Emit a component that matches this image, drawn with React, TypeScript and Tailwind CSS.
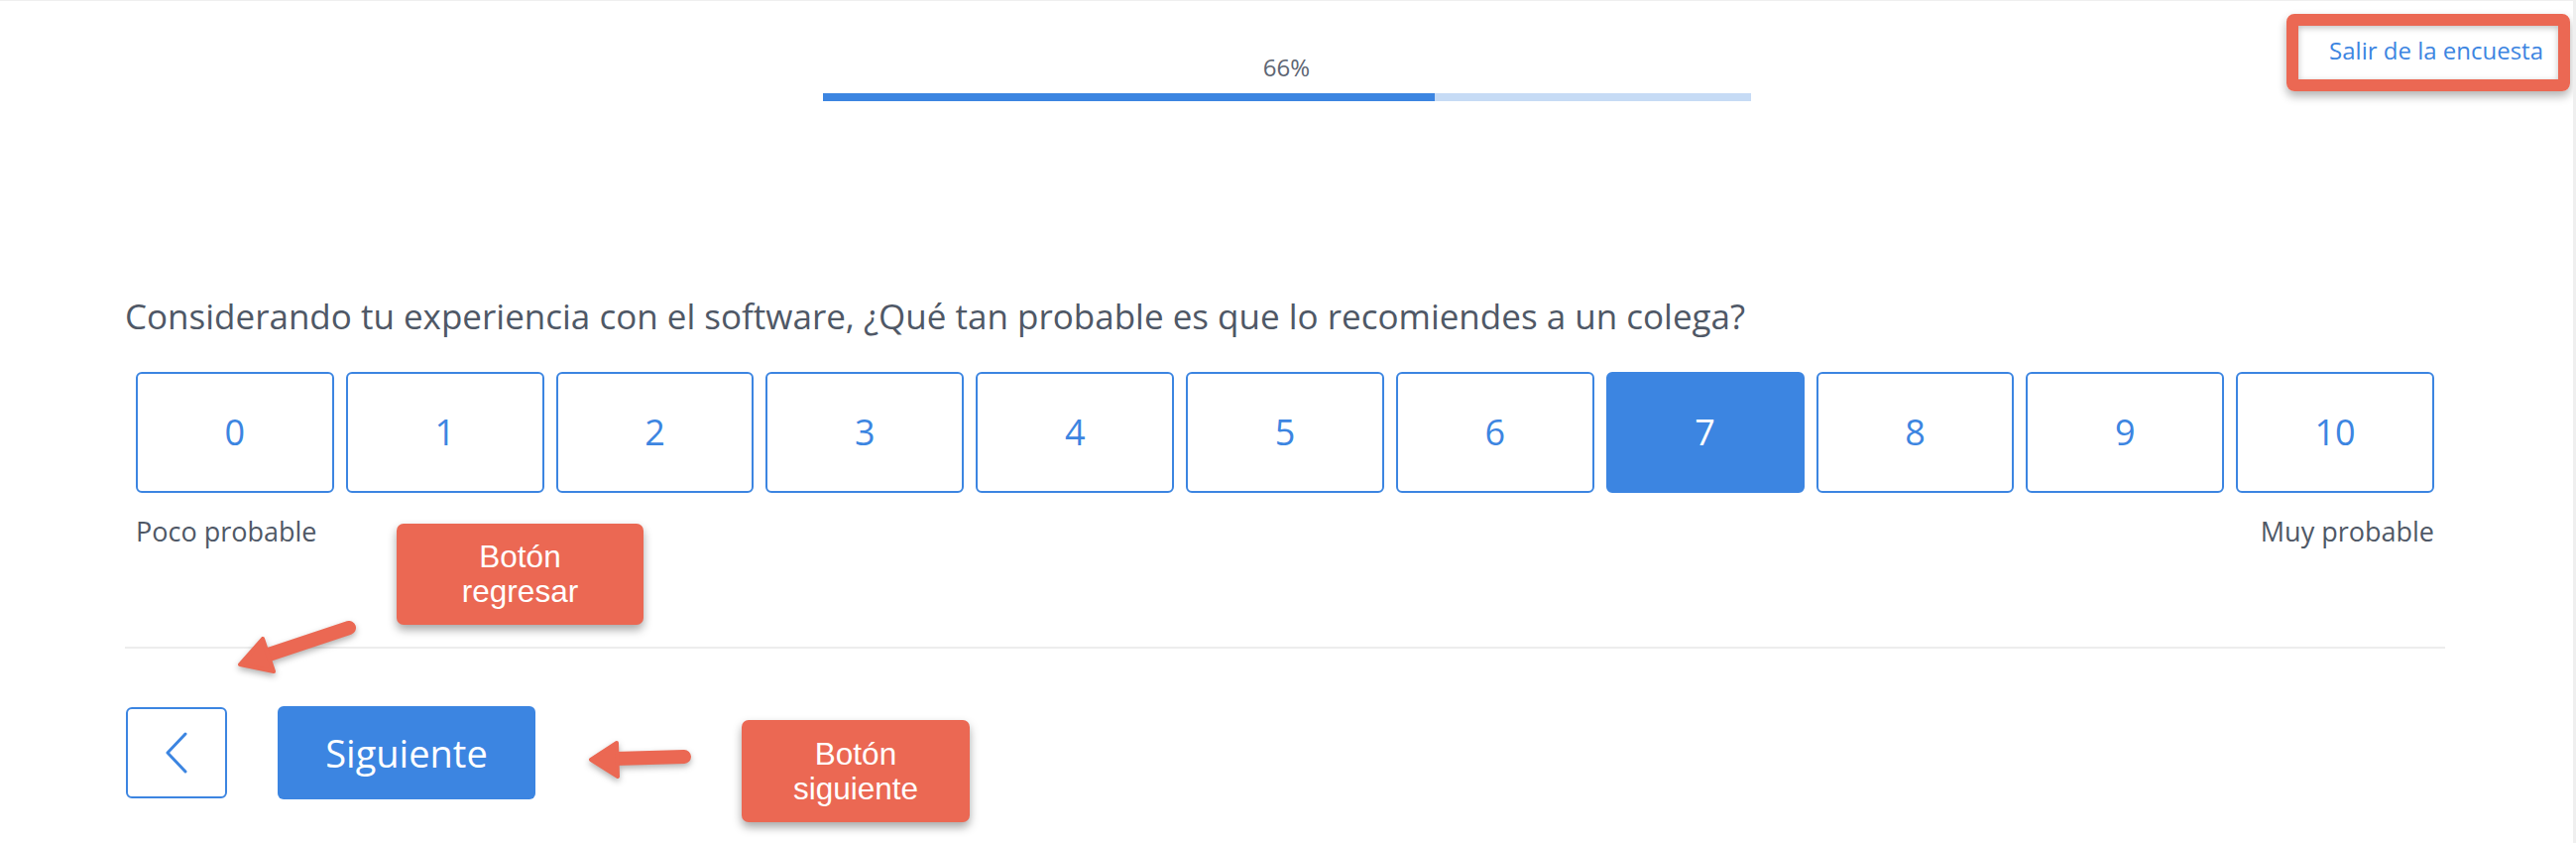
import React, { useState } from "react";

const scores = [0, 1, 2, 3, 4, 5, 6, 7, 8, 9, 10];

const Callout = ({ className, lines }: { className: string; lines: string[] }) => {
  return (
    <div
      className={`absolute flex flex-col items-center justify-center rounded-[7px] bg-[#eb6853] text-center text-[31.5px] leading-[35px] text-white shadow-[0_5px_10px_rgba(0,0,0,0.35)] ${className}`}
      style={{ fontFamily: '"Liberation Sans", Arial, sans-serif' }}
    >
      {lines.map((line) => (
        <span key={line}>{line}</span>
      ))}
    </div>
  );
};

const App = () => {
  const [selected, setSelected] = useState<number>(7);

  return (
    <div
      className="relative h-[850px] w-full overflow-hidden border-t border-r-[3px] border-[#efefef] bg-white"
      style={{ fontFamily: '"Open Sans", "Noto Sans", sans-serif' }}
    >
      {/* Header: progress + exit link */}
      <header className="grid grid-cols-[1fr_936px_1fr]">
        <div />
        <div className="flex flex-col items-center pt-[55px]">
          <span className="text-[24px] leading-none text-[#5d6573]">66%</span>
          <div className="mt-[14px] h-[8px] w-full bg-[#c6dbf5]">
            <div className="h-full w-[66%] bg-[#3c85e1]" />
          </div>
        </div>
        <div className="flex justify-end pt-[38px] pr-[30px]">
          <a href="#" className="relative text-[24px] leading-none text-[#3c85e1]">
            Salir de la encuesta
            {/* highlight frame */}
            <span className="pointer-events-none absolute -top-[25px] -right-[27px] h-[78px] w-[286px] rounded-[8px] border-[12px] border-[#eb6853] shadow-[0_5px_10px_rgba(0,0,0,0.3),inset_0_2px_6px_rgba(0,0,0,0.25)]" />
          </a>
        </div>
      </header>

      {/* Question */}
      <main className="pl-[126px] pr-[129px]">
        <h2 className="mt-[199px] text-[35px] leading-none text-[#4f5866]">
          Considerando tu experiencia con el software, ¿Qué tan probable es que lo recomiendes a un colega?
        </h2>

        <div className="mt-[39px] grid grid-cols-11 gap-[12px] px-[11px]">
          {scores.map((n) => (
            <button
              key={n}
              onClick={() => setSelected(n)}
              className={`flex h-[122px] items-center justify-center rounded-[6px] border-2 border-[#3c85e1] text-[36px] font-medium leading-none ${
                selected === n ? "bg-[#3c85e1] text-white" : "bg-white text-[#3c85e1]"
              }`}
            >
              {n}
            </button>
          ))}
        </div>

        <div className="mt-[25px] flex justify-between px-[11px] text-[27px] leading-none text-[#4f5866]">
          <span>Poco probable</span>
          <span>Muy probable</span>
        </div>

        <div className="mt-[103px] h-[2px] bg-[#ededed]" />

        <div className="mt-[58px] flex items-center">
          <button className="ml-px flex h-[92px] w-[102px] items-center justify-center rounded-[6px] border-2 border-[#3c85e1] bg-white">
            <svg width="24" height="42" viewBox="0 0 24 42" fill="none">
              <path d="M21 2 L3 21 L21 40" stroke="#3c85e1" strokeWidth="3" strokeLinecap="round" strokeLinejoin="round" />
            </svg>
          </button>
          <button className="ml-[51px] flex h-[94px] w-[260px] items-center justify-center rounded-[6px] bg-[#3c85e1] text-[38px] font-medium leading-none text-white">
            Siguiente
          </button>
        </div>
      </main>

      {/* Annotations */}
      <Callout className="left-[400px] top-[527px] h-[102px] w-[249px]" lines={["Botón", "regresar"]} />
      <Callout className="left-[748px] top-[725px] h-[103px] w-[230px]" lines={["Botón", "siguiente"]} />

      <svg
        className="pointer-events-none absolute left-0 top-0 drop-shadow-[0_3px_3px_rgba(0,0,0,0.3)]"
        width="2598"
        height="850"
        viewBox="0 0 2598 850"
      >
        <g fill="#eb6853" stroke="#eb6853" strokeLinecap="round" strokeLinejoin="round">
          <line x1="352" y1="632" x2="268" y2="660" strokeWidth="14" />
          <polygon points="242,669 276,676 265,643" strokeWidth="4" />
          <line x1="690" y1="762" x2="620" y2="764" strokeWidth="14" />
          <polygon points="596,765 623,782 622,748" strokeWidth="4" />
        </g>
      </svg>
    </div>
  );
};

export default App;
